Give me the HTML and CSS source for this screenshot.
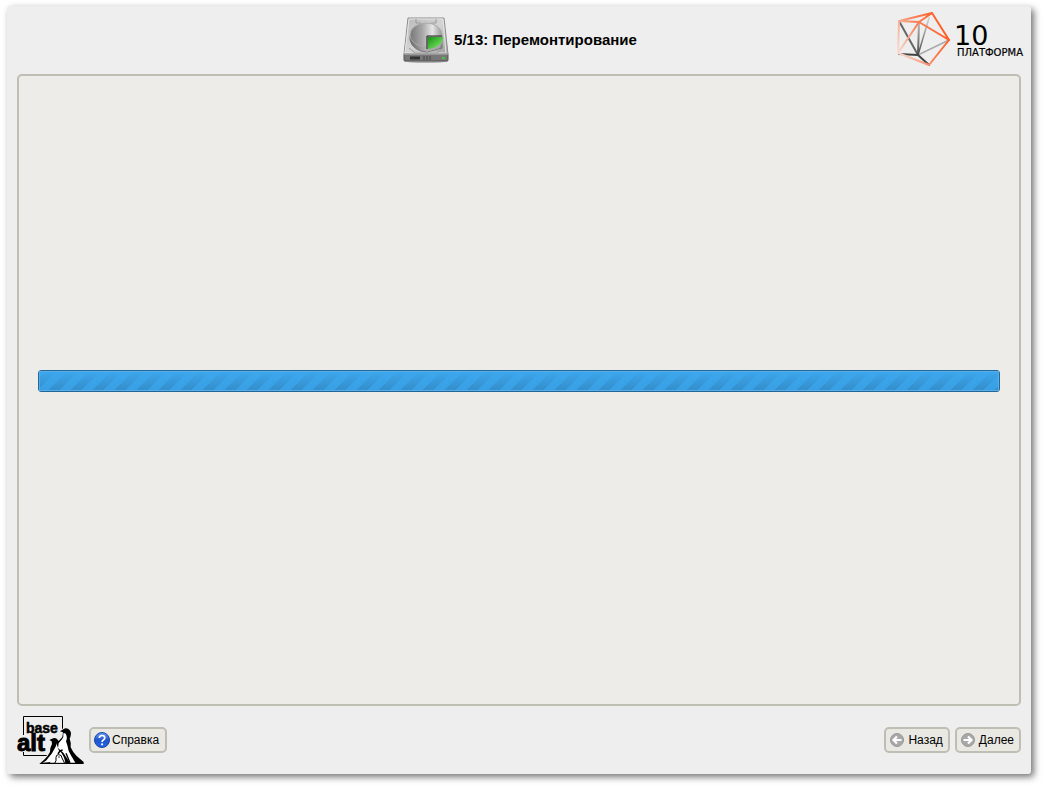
FILE: index.html
```html
<!DOCTYPE html>
<html lang="ru">
    <head>
        <meta charset="utf-8">
        <meta name="viewport" content="width=device-width, initial-scale=1">
        <link rel="stylesheet" href="styles.css">
        <title>Перемонтирование</title>
    </head>
    <body>
        <div class="window">
            <header class="header">
                <div class="step">
                    <svg class="step-icon" viewBox="0 0 48 48" aria-hidden="true">
                        <defs>
                            <linearGradient id="case" x1="0" y1="0" x2="1" y2="1">
                                <stop offset="0" stop-color="#b8b8b8"/>
                                <stop offset=".5" stop-color="#d4d4d4"/>
                                <stop offset="1" stop-color="#a0a0a0"/>
                            </linearGradient>
                            <linearGradient id="disk" x1="0" y1="0" x2="1" y2="0">
                                <stop offset="0" stop-color="#777"/>
                                <stop offset=".4" stop-color="#aaa"/>
                                <stop offset=".7" stop-color="#e6e6e6"/>
                                <stop offset="1" stop-color="#999"/>
                            </linearGradient>
                            <linearGradient id="side" x1="0" y1="0" x2="1" y2="0">
                                <stop offset="0" stop-color="#666"/>
                                <stop offset=".6" stop-color="#c4c4c4"/>
                                <stop offset="1" stop-color="#888"/>
                            </linearGradient>
                            <linearGradient id="slice" x1="0" y1="0" x2="1" y2="1">
                                <stop offset="0" stop-color="#149214"/>
                                <stop offset="1" stop-color="#8cf070"/>
                            </linearGradient>
                        </defs>
                        <ellipse cx="25" cy="45" rx="22" ry="2" fill="#000" opacity=".25"/>
                        <path d="M7 2h36l4 36H3z" fill="url(#case)" stroke="#8c8c8c"/>
                        <path d="M8 3h34l3 34H4z" fill="none" stroke="#e6e6e6"/>
                        <path d="M15 3v4h5M35 3v4h-5M8 32l6 5h22l6-5" fill="none" stroke="#999"/>
                        <path d="M3 38h44v6q0 1-1 1H4q-1 0-1-1z" fill="#777" stroke="#555"/>
                        <path d="M3 38h44" stroke="#c8c8c8"/>
                        <path d="M9 42h10" stroke="#333" stroke-width="3"/>
                        <path d="M12 40v4M23 40v4M26 40v4M29 40v4" stroke="#444"/>
                        <path d="M41 42h3" stroke="#4bc33c" stroke-width="2"/>
                        <path d="M9 20v4q3 11 17 12l15-4v-12z" fill="url(#side)" stroke="#777"/>
                        <ellipse cx="25" cy="19" rx="16" ry="12" fill="url(#disk)" stroke="#aaa"/>
                        <path d="M25 20h17v5l-4 7-13 4z" fill="#aaa"/>
                        <path d="M27 21h15q0 10-15 12z" fill="url(#slice)"/>
                        <path d="M26 33V20h15" fill="none" stroke="#222"/>
                    </svg>
                    <h1 class="step-title">5/13: Перемонтирование</h1>
                </div>
                <svg class="platform-logo" viewBox="0 0 128 58" role="img" aria-label="10 Платформа">
                    <defs>
                        <linearGradient id="fade" gradientUnits="userSpaceOnUse" x1="52" y1="20" x2="2" y2="42">
                            <stop offset="0" stop-color="#ff5a1f"/>
                            <stop offset=".5" stop-color="#f8835c"/>
                            <stop offset="1" stop-color="#f6ddd5"/>
                        </linearGradient>
                        <linearGradient id="grey" gradientUnits="userSpaceOnUse" x1="22" y1="46" x2="30" y2="8">
                            <stop offset="0" stop-color="#444"/>
                            <stop offset=".5" stop-color="#888"/>
                            <stop offset="1" stop-color="#ccc"/>
                        </linearGradient>
                    </defs>
                    <g fill="none" stroke-linecap="round" stroke-linejoin="round">
                        <path d="M22 44L33 7" stroke="url(#grey)" stroke-width="1.500"/>
                        <path d="M22 44L53 29" stroke="#aaa" stroke-width="1.500"/>
                        <path d="M3 10l19 34" stroke="#666" stroke-width="2"/>
                        <path d="M22 44l1-33" stroke="url(#grey)" stroke-width="2"/>
                        <path d="M3 43l19 1 11 10" stroke="#444" stroke-width="2"/>
                        <path d="M3 10L2 42l31 12 20-25M23 11L2 42" stroke="url(#fade)" stroke-width="2"/>
                        <path d="M3 10l33-8 17 27-30-18zM23 11l13-9" stroke="url(#fade)" stroke-width="2"/>
                    </g>
                    <text class="platform-number" x="58" y="34">10</text>
                    <text class="platform-name" x="61" y="45">ПЛАТФОРМА</text>
                </svg>
            </header>
            <main class="panel">
                <progress class="progress" value="100" max="100" aria-label="Перемонтирование"></progress>
            </main>
            <footer class="footer">
                <svg class="alt-logo" viewBox="0 0 67 50" role="img" aria-label="base alt">
                    <path d="M6.500 20V1.500h39V16M6.500 37v3.500H30" fill="none" stroke="#000"/>
                    <text class="alt-base" x="9" y="18">base</text>
                    <text class="alt-alt" x="0" y="36">alt</text>
                    <g transform="translate(21 9) scale(.3333)">
                        <path d="M66 22l10-6q6-5 14-2 9 5 9 16-1 8-4 14 5 12 3 26 8 18 18 26l21 18v6H4l16-14q10-10 16-22 0-14 6-24l-1-8-7-4 8-4q9-4 15 1l5 6 11-12 2-14z" fill="#000" stroke="#eee" stroke-width="5" paint-order="stroke"/>
                        <path d="M76 28q2 12-4 18l-10 12-2 14 16 14 20 30h16l-12-20q-10-14-12-32l-4-12q6-12-2-24z" fill="#fff"/>
                        <path d="M52 50q6 10 0 20l-10 18-18 22-10 6 24-2 10-16 16-14-6-18z" fill="#fff"/>
                        <path d="M46 84q10-10 20-2 12 12 16 34H36q8-12 10-32z" fill="#fff"/>
                        <path d="M74 78q-10 2-14 12M84 88l12 28" fill="none" stroke="#000" stroke-width="4"/>
                        <path d="M50 118q6-6 4-18 0-8 8-8 10 0 10 10l8 16z" fill="#fff" stroke="#000" stroke-width="3"/>
                        <circle cx="63" cy="99" r="2" fill="#000"/>
                    </g>
                </svg>
                <button class="button button-help" type="button">
                    <svg class="help-icon" viewBox="0 0 16 16" aria-hidden="true">
                        <defs>
                            <linearGradient id="ball" x1="0" y1="0" x2="0" y2="1">
                                <stop offset="0" stop-color="#6f9ff0"/>
                                <stop offset=".5" stop-color="#1f55cf"/>
                                <stop offset="1" stop-color="#2464e8"/>
                            </linearGradient>
                        </defs>
                        <circle cx="8" cy="8" r="7.500" fill="url(#ball)" stroke="#1746a8"/>
                        <path d="M5.300 6q.2-2.500 2.800-2.500T10.800 6q0 1.300-1.500 2.100Q8.100 8.800 8.100 10" fill="none" stroke="#fff" stroke-width="1.700"/>
                        <circle cx="8.100" cy="12.300" r="1.100" fill="#fff"/>
                    </svg>
                    Справка
                </button>
                <div class="nav">
                    <button class="button" type="button">
                        <svg class="nav-icon" viewBox="0 0 14 14" aria-hidden="true">
                            <circle cx="7" cy="7" r="6.500" fill="#a8a8a8" stroke="#989898"/>
                            <path d="M11.500 7H4M7 3.500L3.500 7 7 10.500" fill="none" stroke="#fff" stroke-width="2.200"/>
                        </svg>
                        Назад
                    </button>
                    <button class="button" type="button">
                        <svg class="nav-icon" viewBox="0 0 14 14" aria-hidden="true">
                            <circle cx="7" cy="7" r="6.500" fill="#a8a8a8" stroke="#989898"/>
                            <path d="M2.500 7H10M7 3.500L10.500 7 7 10.500" fill="none" stroke="#fff" stroke-width="2.200"/>
                        </svg>
                        Далее
                    </button>
                </div>
            </footer>
        </div>
    </body>
</html>
```
FILE: styles.css
```css
body {
    background: #fff;
    box-sizing: border-box;
    color: #000;
    display: flex;
    font-family: "Liberation Sans", Arial, sans-serif;
    font-size: 12px;
    margin: 0;
    min-height: 100vh;
    padding: 6px 13px 14px 7px;
}

.window {
    background: #eee;
    border-radius: 3px;
    box-shadow: 3px 3px 7px rgba(0, 0, 0, 0.55);
    display: flex;
    flex: 1;
    flex-direction: column;
}

.header {
    align-items: center;
    display: grid;
    grid-template-columns: 1fr auto 1fr;
    height: 68px;
    padding: 0 7px;
}

.step {
    align-items: center;
    display: flex;
    gap: 5px;
    grid-column: 2;
}

.step-icon {
    height: 48px;
    width: 48px;
}

.step-title {
    font-size: 15px;
    font-weight: bold;
    line-height: 18px;
    margin: 0;
}

.platform-logo {
    height: 58px;
    justify-self: end;
    width: 128px;
}

.platform-number {
    font-family: "DejaVu Sans", sans-serif;
    font-size: 27px;
}

.platform-name {
    font-family: "DejaVu Sans", sans-serif;
    font-size: 10px;
    stroke: #000;
    stroke-width: 0.2px;
}

.panel {
    align-items: center;
    background: #edece8;
    border: 2px solid #bfbeb3;
    border-radius: 5px;
    display: flex;
    flex: 1;
    margin: 0 10px;
    padding: 0 19px 18px;
}

.progress {
    appearance: none;
    background: #389fe3;
    border: 1px solid #20679b;
    border-radius: 3px;
    box-sizing: border-box;
    flex: 1;
    height: 22px;
    overflow: hidden;
}

.progress::-webkit-progress-bar {
    background: none;
}

.progress::-webkit-progress-value {
    background:
        linear-gradient(#3da7ed, rgba(61, 167, 237, 0)),
        linear-gradient(135deg, #338dca 25%, #389fe3 25%, #389fe3 50%, #338dca 50%, #338dca 75%, #389fe3 75%) 7px 0 / 22px 22px;
    box-shadow: inset 0 0 0 1px #5baee5;
}

.footer {
    align-items: center;
    display: flex;
    gap: 5px;
    height: 68px;
    padding: 0 10px;
}

.alt-logo {
    height: 50px;
    width: 67px;
}

.alt-base,
.alt-alt {
    font-weight: bold;
    stroke: #000;
}

.alt-base {
    font-size: 14px;
    stroke-width: 0.5px;
}

.alt-alt {
    font-size: 24px;
    stroke-width: 1px;
}

.button {
    align-items: center;
    background: #e9e8e2;
    border: 2px solid #bfbeb3;
    border-radius: 5px;
    color: #000;
    display: flex;
    font-family: inherit;
    font-size: 12px;
    gap: 4px;
    height: 26px;
    padding: 0 5px 0 4px;
}

.button-help {
    gap: 2px;
    padding: 0 6px 0 3px;
}

.help-icon {
    height: 16px;
    width: 16px;
}

.nav {
    display: flex;
    gap: 5px;
    margin-left: auto;
}

.nav-icon {
    height: 14px;
    width: 14px;
}
```
